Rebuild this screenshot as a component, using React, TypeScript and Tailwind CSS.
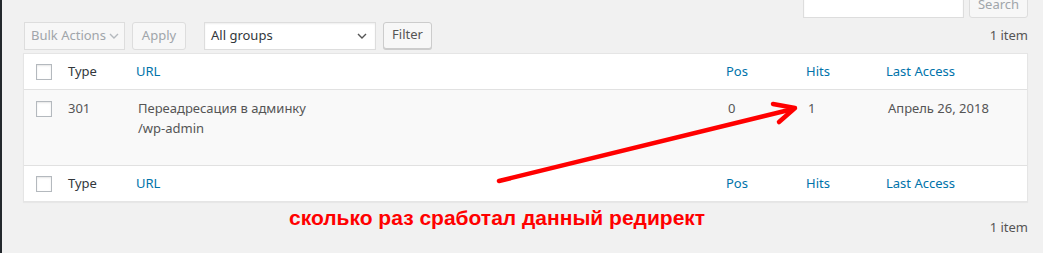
const font = { fontFamily: '"Noto Sans", "Open Sans", sans-serif' };

function Checkbox() {
    return <div className="w-[16px] h-[16px] bg-white border border-[#b4b9be] shadow-[inset_0_1px_2px_rgba(0,0,0,0.1)]"></div>;
}

function Chevron({ color }: { color: string }) {
    return (
        <svg width="10" height="6" viewBox="0 0 10 6" fill="none">
            <path d="M1 1l4 4 4-4" stroke={color} strokeWidth="1.4" />
        </svg>
    );
}

function HeadRow({ bottom }: { bottom?: boolean }) {
    return (
        <div className={`grid grid-cols-[44px_68px_590px_80px_80px_1fr] items-center h-[36px] text-[13px] ${bottom ? "border-t border-[#e1e1e1]" : "border-b border-[#e1e1e1]"}`}>
            <div className="pl-[12px]"><Checkbox /></div>
            <div className="text-[#32373c]">Type</div>
            <div className="text-[#0073aa]">URL</div>
            <div className="text-[#0073aa]">Pos</div>
            <div className="text-[#0073aa]">Hits</div>
            <div className="text-[#0073aa]">Last Access</div>
        </div>
    );
}

export default function App() {
    return (
        <div className="relative w-[1043px] h-[253px] overflow-hidden bg-[#f1f1f1] flex" style={font}>
            <div className="w-[2px] bg-[#23282d]"></div>
            <div className="flex-1 pl-[21px] pr-[15px]">
                <div className="flex justify-end gap-[5px] -mt-[10px] h-[28px]">
                    <div className="w-[161px] h-[28px] bg-white border border-[#ddd] shadow-[inset_0_1px_2px_rgba(0,0,0,0.07)]"></div>
                    <div className="w-[59px] h-[28px] bg-[#f7f7f7] border border-[#ddd] rounded-[3px] text-[13px] text-[#a0a5aa] flex items-end justify-center pb-[3px]">Search</div>
                </div>
                <div className="flex items-center mt-[4px] h-[28px] text-[13px]">
                    <div className="ml-[1px] w-[101px] h-[28px] bg-[#f7f7f7] border border-[#ddd] flex items-center justify-between pl-[6px] pr-[5px] text-[#a0a5aa]">
                        <span>Bulk Actions</span>
                        <Chevron color="#b4b9be" />
                    </div>
                    <div className="ml-[7px] w-[54px] h-[28px] bg-[#f7f7f7] border border-[#ddd] rounded-[3px] flex items-center justify-center text-[#a0a5aa]">Apply</div>
                    <div className="ml-[18px] w-[172px] h-[28px] bg-white border border-[#ddd] flex items-center justify-between pl-[6px] pr-[8px] text-[#32373c] shadow-[inset_0_1px_2px_rgba(0,0,0,0.07)]">
                        <span>All groups</span>
                        <Chevron color="#555" />
                    </div>
                    <div className="ml-[7px] -mt-[2px] w-[49px] h-[27px] bg-[#f7f7f7] border border-[#ccc] rounded-[3px] shadow-[0_1px_0_#ccc] flex items-center justify-center text-[#555]">Filter</div>
                    <div className="ml-auto text-[#555]">1 item</div>
                </div>
                <div className="mt-[3px] bg-white border border-[#e5e5e5] shadow-[0_1px_1px_rgba(0,0,0,0.04)]">
                    <HeadRow />
                    <div className="grid grid-cols-[44px_68px_590px_80px_80px_1fr] h-[75px] bg-[#f9f9f9] text-[13px] leading-[20px] text-[#555] pt-[8px]">
                        <div className="pl-[12px] pt-[3px]"><Checkbox /></div>
                        <div>301</div>
                        <div className="pl-[2px]">
                            <div>Переадресация в админку</div>
                            <div>/wp-admin</div>
                        </div>
                        <div className="pl-[2px]">0</div>
                        <div className="pl-[2px]">1</div>
                        <div className="pl-[2px]">Апрель 26, 2018</div>
                    </div>
                    <HeadRow bottom />
                </div>
                <div className="flex justify-between items-start">
                    <div className="ml-[266px] text-[21px] font-bold text-[#ff0000]" style={{ fontFamily: '"Liberation Sans", Arial, sans-serif' }}>
                        сколько раз сработал данный редирект
                    </div>
                    <div className="mt-[16px] text-[13px] text-[#555]">1 item</div>
                </div>
            </div>
            <svg className="absolute inset-0 pointer-events-none" width="1043" height="253">
                <g stroke="#ff0000" strokeWidth="4.5" strokeLinecap="round" fill="none">
                    <path d="M499 181L793 109" />
                    <path d="M773 104L795 108L779 122" strokeLinejoin="round" />
                </g>
            </svg>
        </div>
    );
}
